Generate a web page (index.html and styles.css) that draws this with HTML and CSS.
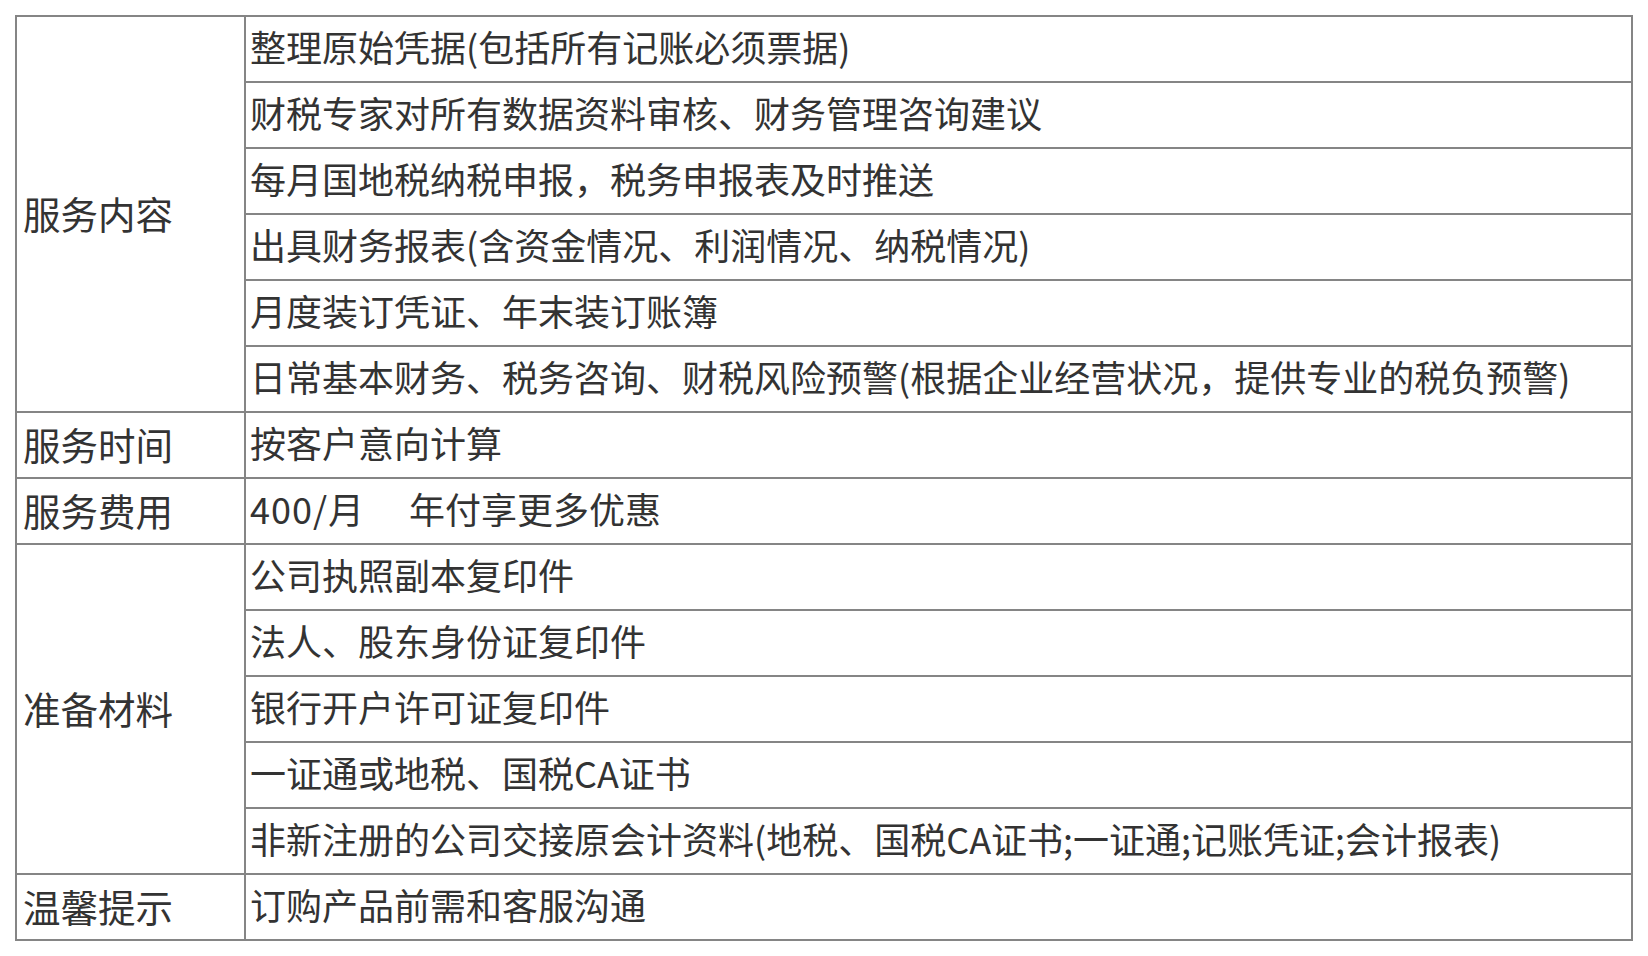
FILE: index.html
```html
<!DOCTYPE html>
<html lang="zh-CN">
<head>
<meta charset="utf-8">
<title>服务内容</title>
<link rel="stylesheet" href="styles.css">
</head>
<body>
<table class="svc">
  <colgroup><col class="c-label"><col class="c-value"></colgroup>
  <tbody>
    <tr><td class="label" rowspan="6">服务内容</td><td>整理原始凭据(包括所有记账必须票据)</td></tr>
    <tr><td>财税专家对所有数据资料审核、财务管理咨询建议</td></tr>
    <tr><td>每月国地税纳税申报，税务申报表及时推送</td></tr>
    <tr><td>出具财务报表(含资金情况、利润情况、纳税情况)</td></tr>
    <tr><td>月度装订凭证、年末装订账簿</td></tr>
    <tr><td>日常基本财务、税务咨询、财税风险预警(根据企业经营状况，提供专业的税负预警)</td></tr>
    <tr><td class="label">服务时间</td><td>按客户意向计算</td></tr>
    <tr><td class="label">服务费用</td><td><span class="price">400/月</span><span class="gap"></span>年付享更多优惠</td></tr>
    <tr><td class="label" rowspan="5">准备材料</td><td>公司执照副本复印件</td></tr>
    <tr><td>法人、股东身份证复印件</td></tr>
    <tr><td>银行开户许可证复印件</td></tr>
    <tr><td>一证通或地税、国税CA证书</td></tr>
    <tr><td>非新注册的公司交接原会计资料(地税、国税CA证书;一证通;记账凭证;会计报表)</td></tr>
    <tr><td class="label">温馨提示</td><td>订购产品前需和客服沟通</td></tr>
  </tbody>
</table>
</body>
</html>
```

FILE: styles.css
```css
html, body {
  margin: 0;
  padding: 0;
  background: #ffffff;
}

.svc {
  margin: 15px 0 0 15px;
  width: 1618px;
  border-collapse: collapse;
  table-layout: fixed;
  font-family: "Noto Sans CJK SC", "Noto Sans", sans-serif;
  font-size: 36px;
  color: #333333;
}

.c-label { width: 229px; }

.svc td {
  border: 2px solid #858585;
  height: 58px;
  line-height: 58px;
  padding: 0 0 6px 4px;
  vertical-align: middle;
  white-space: nowrap;
  box-sizing: content-box;
}

.svc td.label {
  font-size: 37.5px;
  height: 55px;
  line-height: 55px;
  padding-top: 3px;
  padding-left: 6px;
}

.price {
  letter-spacing: 1px;
}

.gap {
  display: inline-block;
  width: 44px;
}
```
